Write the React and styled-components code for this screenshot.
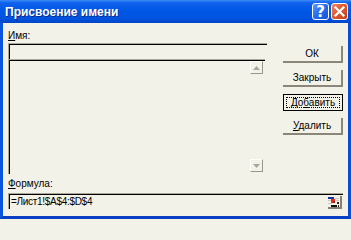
import styled, { createGlobalStyle, css } from 'styled-components';

const GlobalStyle = createGlobalStyle`
  html, body {
    margin: 0;
    padding: 0;
    background: #f3f2e8;
  }
`;

const FACE = '#f3f2e8';
const SHADOW = '#8a877a';

export default function App() {
  return (
    <>
      <GlobalStyle />
      <Window>
        <TitleBar>
          <Title>Присвоение имени</Title>
          <Caps>
            <CapButton kind="help">?</CapButton>
            <CapButton kind="close">
              <svg width="11" height="11" viewBox="0 0 11 11">
                <path d="M1.5 1.5 L9.5 9.5 M9.5 1.5 L1.5 9.5" stroke="#fff" strokeWidth="2.2" strokeLinecap="square" />
              </svg>
            </CapButton>
          </Caps>
        </TitleBar>
        <Frame>
          <Top>
            <LeftCol>
              <Label><u>И</u>мя:</Label>
              <NameField />
              <ListBox>
                <ListArea />
                <ScrollCol>
                  <ScrollArrow>
                    <svg width="7" height="4" viewBox="0 0 7 4"><path d="M3.5 0 L7 4 L0 4 Z" fill="#a8a69c" /></svg>
                  </ScrollArrow>
                  <ScrollArrow>
                    <svg width="7" height="4" viewBox="0 0 7 4"><path d="M0 0 L7 0 L3.5 4 Z" fill="#a8a69c" /></svg>
                  </ScrollArrow>
                </ScrollCol>
              </ListBox>
            </LeftCol>
            <Buttons>
              <Button>ОК</Button>
              <Button>Закрыть</Button>
              <Button focused>До<u>б</u>авить</Button>
              <Button><u>У</u>далить</Button>
            </Buttons>
          </Top>
          <FormulaLabel><u>Ф</u>ормула:</FormulaLabel>
          <FormulaField>
            <FormulaText>=Лист1!$A$4:$D$4</FormulaText>
            <Collapse>
              <svg width="12" height="11" viewBox="0 0 12 11">
                <rect x="0" y="0" width="6" height="2" fill="#1a2f9e" />
                <rect x="7" y="1" width="4" height="1" fill="#c8c8c8" />
                <rect x="0" y="3" width="4" height="1" fill="#c8c8c8" />
                <rect x="3" y="2" width="4" height="4" fill="#e0301e" />
                <rect x="5" y="4" width="2" height="2" fill="#b0180c" />
                <rect x="8" y="3" width="3" height="1" fill="#c8c8c8" />
                <rect x="0" y="6" width="4" height="1" fill="#c8c8c8" />
                <rect x="9" y="5" width="2" height="2" fill="#202020" />
                <rect x="3" y="8" width="6" height="2" fill="#101010" />
                <rect x="10" y="8" width="1" height="2" fill="#202020" />
              </svg>
            </Collapse>
          </FormulaField>
        </Frame>
      </Window>
    </>
  );
}

const Window = styled.div`
  width: 351px;
  height: 219px;
  display: flex;
  flex-direction: column;
  font-family: "Liberation Sans", Arial, sans-serif;
  font-size: 10px;
  color: #000;
  background: ${FACE};
`;

const TitleBar = styled.div`
  height: 23px;
  flex-shrink: 0;
  display: flex;
  align-items: center;
  padding: 0 3px 0 5px;
  box-sizing: border-box;
  background: linear-gradient(to bottom, #3d8cf7 0%, #0f62ec 12%, #0058e6 45%, #0053e0 80%, #0046c8 100%);
`;

const Title = styled.div`
  color: #fff;
  font-weight: bold;
  font-size: 12px;
  text-shadow: 1px 1px 0 #0b2a8a;
`;

const Caps = styled.div`
  margin-left: auto;
  display: flex;
  gap: 2px;
`;

const CapButton = styled.div`
  width: 17px;
  height: 17px;
  box-sizing: border-box;
  border: 1px solid #fff;
  border-radius: 3px;
  display: flex;
  align-items: center;
  justify-content: center;
  color: #fff;
  font-weight: bold;
  font-size: 15px;
  font-family: "DejaVu Sans", sans-serif;
  ${(p) =>
    p.kind === 'close'
      ? css`background: linear-gradient(135deg, #f08a62 0%, #df5a30 45%, #c8401c 100%);`
      : css`background: linear-gradient(135deg, #5f9cf8 0%, #2c6ef0 45%, #1450d8 100%);`}
`;

const Frame = styled.div`
  flex: 1;
  display: flex;
  flex-direction: column;
  border-left: 3px solid #0a55e0;
  border-right: 3px solid #0a4ed6;
  border-bottom: 3px solid #0a3fc4;
  padding: 6px 5px 0 5px;
`;

const Top = styled.div`
  display: flex;
  gap: 16px;
`;

const LeftCol = styled.div`
  width: 259px;
  display: flex;
  flex-direction: column;
`;

const Label = styled.div`
  line-height: 13px;
  height: 13px;
  margin-bottom: 1px;
`;

const sunken = css`
  box-sizing: border-box;
  border-top: 1px solid #aca899;
  border-left: 1px solid #aca899;
  box-shadow: inset 1px 1px 0 #000;
`;

const NameField = styled.div`
  ${sunken};
  width: 259px;
  height: 16px;
`;

const ListBox = styled.div`
  ${sunken};
  width: 257px;
  height: 115px;
  display: flex;
`;

const ListArea = styled.div`
  flex: 1;
`;

const ScrollCol = styled.div`
  width: 13px;
  padding: 1px 2px 2px 0;
  display: flex;
  flex-direction: column;
  justify-content: space-between;
`;

const ScrollArrow = styled.div`
  width: 13px;
  height: 13px;
  box-sizing: border-box;
  border-right: 1px solid #9a978a;
  border-bottom: 1px solid #9a978a;
  border-top: 1px solid #fff;
  border-left: 1px solid #fff;
  display: flex;
  align-items: center;
  justify-content: center;
`;

const Buttons = styled.div`
  width: 60px;
  padding-top: 17px;
  display: flex;
  flex-direction: column;
  gap: 7px;
`;

const Button = styled.button`
  position: relative;
  width: 60px;
  height: 17px;
  padding: 0;
  box-sizing: border-box;
  background: ${FACE};
  border: none;
  border-right: 2px solid ${SHADOW};
  border-bottom: 2px solid ${SHADOW};
  font-family: "Liberation Sans", Arial, sans-serif;
  font-size: 10px;
  color: #000;
  text-align: center;
  ${(p) =>
    p.focused &&
    css`
      border: 1px solid #000;
      &::after {
        content: '';
        position: absolute;
        inset: 2px;
        border: 1px dotted #000;
      }
    `}
`;

const FormulaLabel = styled(Label)`
  margin-top: 3px;
  margin-bottom: 3px;
`;

const FormulaField = styled.div`
  ${sunken};
  width: 335px;
  height: 16px;
  display: flex;
  align-items: center;
  padding-left: 2px;
`;

const FormulaText = styled.div`
  flex: 1;
  line-height: 14px;
  letter-spacing: -0.3px;
`;

const Collapse = styled.div`
  width: 14px;
  height: 13px;
  margin-right: 1px;
  margin-top: 1px;
  box-sizing: border-box;
  border-right: 2px solid #8a7f70;
  border-bottom: 2px solid #8a7f70;
  display: flex;
  align-items: flex-start;
  justify-content: flex-end;
  padding: 1px 0 0 0;
`;
